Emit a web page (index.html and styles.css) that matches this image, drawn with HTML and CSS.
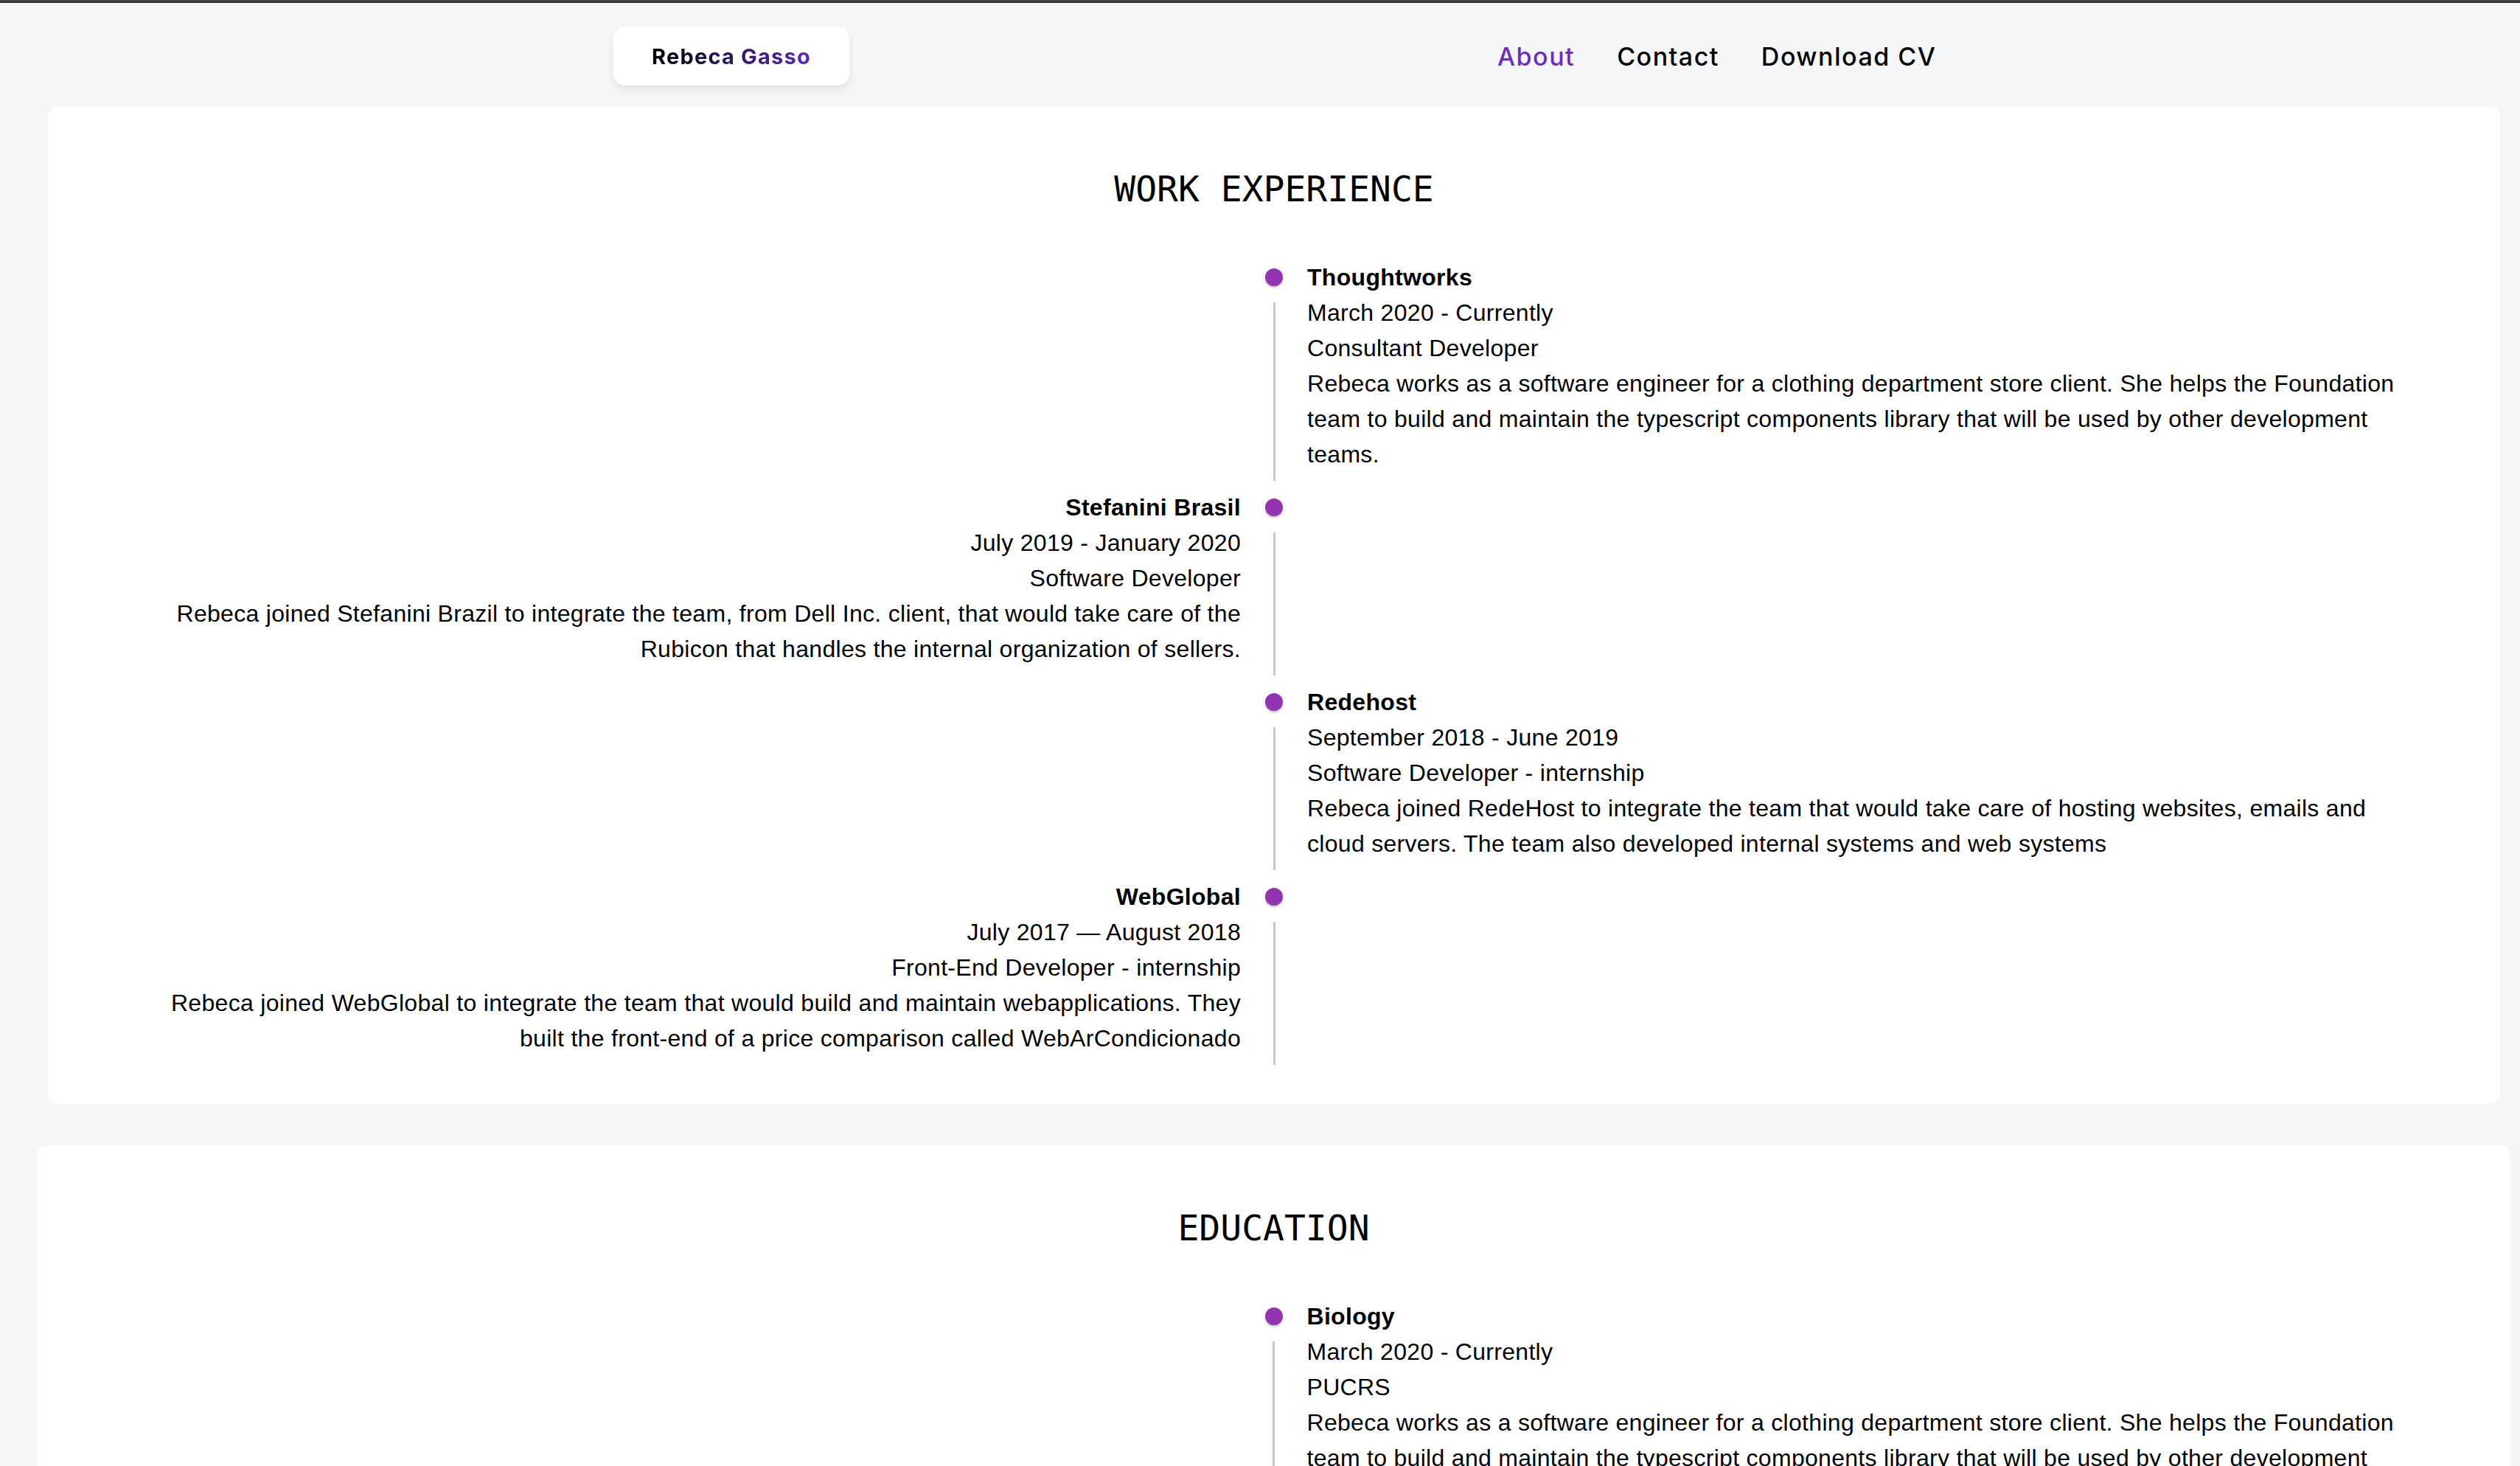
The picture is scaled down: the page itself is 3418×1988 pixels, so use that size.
FILE: index.html
```html
<!DOCTYPE html>
<html lang="en">
<head>
<meta charset="utf-8">
<title>Rebeca Gasso</title>
<link rel="stylesheet" href="styles.css">
</head>
<body>
<div class="topbar"></div>
<header class="header">
  <div class="logo"><span class="logo-text">Rebeca Gasso</span></div>
  <nav class="nav">
    <a class="nav-link nav-link-active" href="#">About</a>
    <a class="nav-link" href="#">Contact</a>
    <a class="nav-link" href="#">Download CV</a>
  </nav>
</header>
<main class="main">
  <section class="card card-work">
    <h2 class="card-title">WORK EXPERIENCE</h2>
    <div class="timeline">
      <div class="entry entry-right">
        <div class="entry-dot"></div>
        <h3 class="entry-title">Thoughtworks</h3>
        <div class="entry-line"></div>
        <div class="entry-body">
          <p>March 2020 - Currently</p>
          <p>Consultant Developer</p>
          <p>Rebeca works as a software engineer for a clothing department store client. She helps the Foundation team to build and maintain the typescript components library that will be used by other development teams.</p>
        </div>
      </div>
      <div class="entry entry-left">
        <div class="entry-dot"></div>
        <h3 class="entry-title">Stefanini Brasil</h3>
        <div class="entry-line"></div>
        <div class="entry-body">
          <p>July 2019 - January 2020</p>
          <p>Software Developer</p>
          <p>Rebeca joined Stefanini Brazil to integrate the team, from Dell Inc. client, that would take care of the Rubicon that handles the internal organization of sellers.</p>
        </div>
      </div>
      <div class="entry entry-right">
        <div class="entry-dot"></div>
        <h3 class="entry-title">Redehost</h3>
        <div class="entry-line"></div>
        <div class="entry-body">
          <p>September 2018 - June 2019</p>
          <p>Software Developer - internship</p>
          <p>Rebeca joined RedeHost to integrate the team that would take care of hosting websites, emails and cloud servers. The team also developed internal systems and web systems</p>
        </div>
      </div>
      <div class="entry entry-left">
        <div class="entry-dot"></div>
        <h3 class="entry-title">WebGlobal</h3>
        <div class="entry-line"></div>
        <div class="entry-body">
          <p>July 2017 — August 2018</p>
          <p>Front-End Developer - internship</p>
          <p>Rebeca joined WebGlobal to integrate the team that would build and maintain webapplications. They built the front-end of a price comparison called WebArCondicionado</p>
        </div>
      </div>
    </div>
  </section>
  <section class="card card-education">
    <h2 class="card-title">EDUCATION</h2>
    <div class="timeline">
      <div class="entry entry-right">
        <div class="entry-dot"></div>
        <h3 class="entry-title">Biology</h3>
        <div class="entry-line"></div>
        <div class="entry-body">
          <p>March 2020 - Currently</p>
          <p>PUCRS</p>
          <p>Rebeca works as a software engineer for a clothing department store client. She helps the Foundation team to build and maintain the typescript components library that will be used by other development teams.</p>
        </div>
      </div>
    </div>
  </section>
</main>
</body>
</html>
```

FILE: styles.css
```css
html, body {
  margin: 0;
  padding: 0;
}

body {
  background: #f5f6f8;
  font-family: "Liberation Sans", Arial, sans-serif;
  color: #000;
}

.topbar {
  height: 4px;
  background: linear-gradient(180deg, #4a4a4a, #2e2e2e);
}

.header {
  display: flex;
  align-items: center;
  padding: 32px 0 28px 832px;
}

.logo {
  width: 320px;
  height: 80px;
  display: flex;
  align-items: center;
  justify-content: center;
  background: #fff;
  border-radius: 16px;
  box-shadow: 0 6px 12px rgba(0, 0, 0, 0.08);
}

.logo-text {
  font-family: Inter, "Liberation Sans", sans-serif;
  font-weight: 700;
  font-size: 29px;
  letter-spacing: 1.2px;
  background: linear-gradient(90deg, #000 0%, #2a1458 45%, #5a2bb6 100%);
  -webkit-background-clip: text;
  background-clip: text;
  color: transparent;
}

.nav {
  display: flex;
  gap: 57px;
  margin-left: 879px;
}

.nav-link {
  font-family: Inter, "Liberation Sans", sans-serif;
  font-weight: 500;
  font-size: 34px;
  letter-spacing: 1.5px;
  color: #000;
  text-decoration: none;
}

.nav-link-active {
  color: #6a2fb6;
}

.main {
  display: flex;
  flex-direction: column;
  gap: 56px;
}

.card {
  background: #fff;
  border-radius: 14px;
  padding: 84px 115px 41px;
}

.card-work {
  margin: 0 27px 0 65px;
}

.card-education {
  margin: 0 13px 0 50px;
  padding-left: 130px;
  padding-right: 130px;
}

.card-title {
  font-family: "DejaVu Sans Mono", "Liberation Mono", monospace;
  font-weight: 400;
  font-size: 48px;
  line-height: 56px;
  text-align: center;
  margin: 0 0 68px;
}

.entry {
  display: grid;
  grid-template-columns: 1fr 90px 1fr;
  grid-template-rows: 48px auto;
  margin-bottom: 12px;
}

.entry-dot {
  grid-column: 2;
  grid-row: 1;
  justify-self: center;
  align-self: center;
  width: 24px;
  height: 24px;
  border-radius: 50%;
  background: #9334b0;
  box-shadow: 0 2px 3px rgba(0, 0, 0, 0.25);
}

.entry-title {
  grid-row: 1;
  margin: 0;
  font-size: 32px;
  font-weight: 700;
  line-height: 48px;
  letter-spacing: 0.3px;
}

.entry-line {
  grid-column: 2;
  grid-row: 2;
  justify-self: center;
  width: 3px;
  margin-top: 10px;
  background: #c6c6c6;
}

.entry-body {
  grid-row: 2;
  padding-bottom: 12px;
  font-size: 32px;
  line-height: 48px;
  letter-spacing: 0.3px;
}

.entry-body p {
  margin: 0;
}

.entry-right .entry-title,
.entry-right .entry-body {
  grid-column: 3;
}

.entry-left .entry-title,
.entry-left .entry-body {
  grid-column: 1;
  text-align: right;
}
```
